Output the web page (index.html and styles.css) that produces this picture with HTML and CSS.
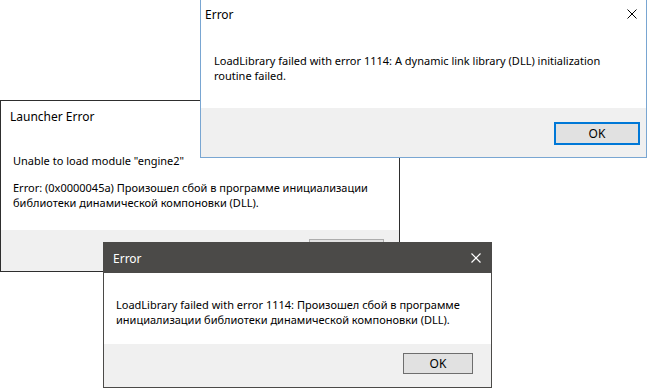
FILE: index.html
```html
<!DOCTYPE html>
<html lang="en">
<head>
    <meta charset="UTF-8">
    <meta name="viewport" content="width=device-width, initial-scale=1.0">
    <link rel="stylesheet" href="styles.css">
</head>
<body>
    <div class="desktop">
        <!-- Launcher error, behind the others -->
        <div class="dialog dialog-launcher">
            <div class="titlebar">
                <span class="title">Launcher Error</span>
            </div>
            <div class="content">
                <p class="line">Unable to load module "engine2"</p>
                <p class="line">Error: (0x0000045a) Произошел сбой в программе инициализации<br>библиотеки динамической компоновки (DLL).</p>
            </div>
            <div class="footer">
                <button class="button">OK</button>
            </div>
        </div>

        <!-- English LoadLibrary error, active window -->
        <div class="dialog dialog-english">
            <div class="titlebar">
                <span class="title">Error</span>
                <svg class="close" width="10" height="10" viewBox="0 0 10 10">
                    <path d="M0.5 0.5 L9.5 9.5 M9.5 0.5 L0.5 9.5" stroke="#000" stroke-width="1" fill="none"/>
                </svg>
            </div>
            <div class="content">
                <p class="line">LoadLibrary failed with error 1114: A dynamic link library (DLL) initialization<br>routine failed.</p>
            </div>
            <div class="footer">
                <button class="button button-default">OK</button>
            </div>
        </div>

        <!-- Russian LoadLibrary error, dark title bar -->
        <div class="dialog dialog-russian">
            <div class="titlebar">
                <span class="title">Error</span>
                <svg class="close" width="10" height="10" viewBox="0 0 10 10">
                    <path d="M0.5 0.5 L9.5 9.5 M9.5 0.5 L0.5 9.5" stroke="#fff" stroke-width="1.2" fill="none"/>
                </svg>
            </div>
            <div class="content">
                <p class="line">LoadLibrary failed with error 1114: Произошел сбой в программе<br>инициализации библиотеки динамической компоновки (DLL).</p>
            </div>
            <div class="footer">
                <button class="button">OK</button>
            </div>
        </div>
    </div>
</body>
</html>
```

FILE: styles.css
```css
body {
    margin: 0;
    background-color: #fff;
    font-family: "Noto Sans", "Open Sans", sans-serif;
    font-size: 11px;
    color: #000;
}
.desktop {
    position: relative;
    width: 648px;
    height: 388px;
    overflow: hidden;
}
.dialog {
    position: absolute; /* windows on the desktop */
    box-sizing: border-box;
    display: flex;
    flex-direction: column;
    background-color: #fff;
    border: 1px solid #2e2e2e;
}
.titlebar {
    height: 30px;
    flex-shrink: 0;
    display: flex;
    align-items: center;
    justify-content: space-between;
    padding: 0 10px 0 8px;
    font-size: 12px;
}
.content {
    flex: 1;
    white-space: nowrap;
}
.line {
    margin: 0;
    line-height: 15px;
}
.footer {
    display: flex;
    justify-content: flex-end;
    align-items: flex-start;
    background-color: #f0f0f0;
}
.button {
    box-sizing: border-box;
    width: 75px;
    height: 23px;
    padding: 0;
    font-family: inherit;
    font-size: 12px;
    color: #000;
    background-color: #e1e1e1;
    border: 1px solid #adadad;
}
.button-default {
    width: 86px;
    border: 2px solid #0078d7;
}

/* Launcher Error */
.dialog-launcher {
    left: 0;
    top: 100px;
    width: 400px;
    height: 172px;
}
.dialog-launcher .titlebar {
    padding-left: 9px;
}
.dialog-launcher .content {
    padding: 22px 0 0 12px;
}
.dialog-launcher .line + .line {
    margin-top: 12px;
}
.dialog-launcher .footer {
    height: 41px;
    padding: 9px 15px 0 0;
    box-sizing: border-box;
}

/* Error, English */
.dialog-english {
    left: 200px;
    top: -2px;
    width: 447px;
    height: 160px;
    border-color: #79a6d2;
}
.dialog-english .titlebar {
    padding-left: 4px;
    padding-right: 9px;
}
.dialog-english .content {
    padding: 24px 0 0 13px;
}
.dialog-english .footer {
    height: 49px;
    padding: 14px 6px 0 0;
    box-sizing: border-box;
}

/* Error, Russian */
.dialog-russian {
    left: 103px;
    top: 242px;
    width: 389px;
    height: 146px;
    border-color: #4b4a48;
}
.dialog-russian .titlebar {
    background-color: #4b4a48;
    color: #fff;
    padding-left: 9px;
    padding-right: 10px;
}
.dialog-russian .content {
    padding: 24px 0 0 12px;
}
.dialog-russian .footer {
    height: 43px;
    padding: 9px 18px 0 0;
    box-sizing: border-box;
}
.dialog-russian .button {
    width: 70px;
    height: 21px;
    border-color: #6e6e6e;
}
```
